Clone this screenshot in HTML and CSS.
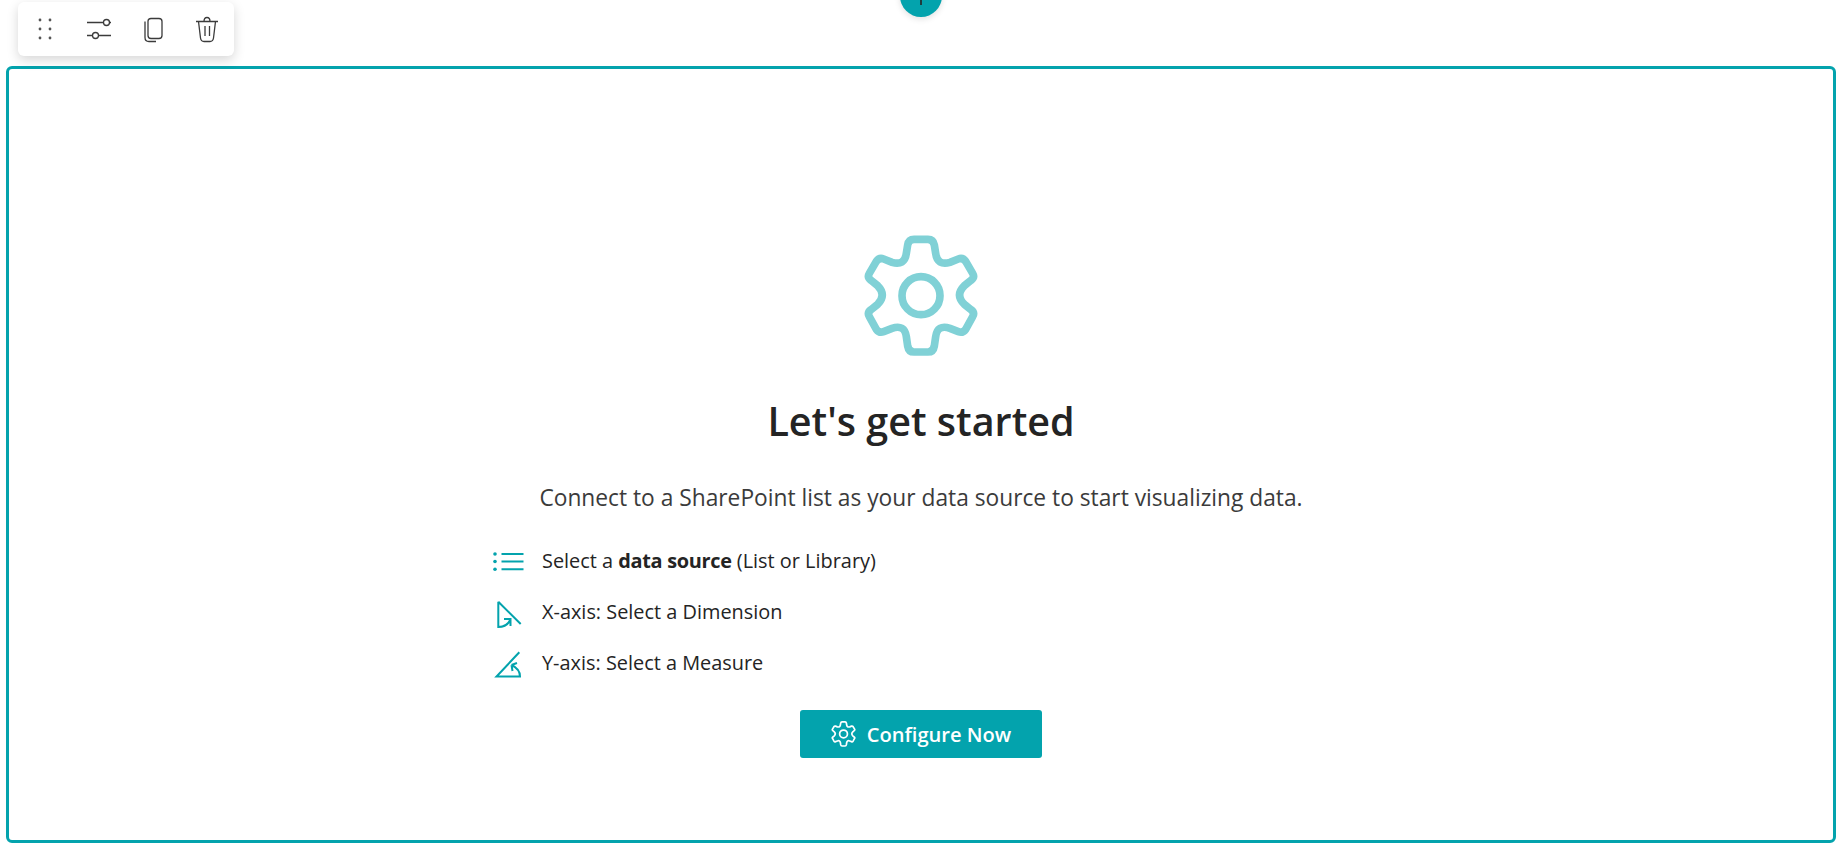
FILE: index.html
```html
<!DOCTYPE html>
<html lang="en">
<head>
    <meta charset="UTF-8">
    <meta name="viewport" content="width=device-width, initial-scale=1.0">
    <title>Let's get started</title>
    <link rel="stylesheet" href="styles.css">
</head>
<body>

    <!-- Add section button, cut off by the top of the page -->
    <div class="add-button"><span class="add-stem"></span></div>

    <!-- Web part toolbar -->
    <div class="part-toolbar">
        <svg class="tool-icon" viewBox="0 0 32 32">
            <g class="dots">
                <circle cx="11" cy="7" r="1.4"/><circle cx="21" cy="7" r="1.4"/>
                <circle cx="11" cy="16" r="1.4"/><circle cx="21" cy="16" r="1.4"/>
                <circle cx="11" cy="25" r="1.4"/><circle cx="21" cy="25" r="1.4"/>
            </g>
        </svg>
        <svg class="tool-icon" viewBox="0 0 32 32">
            <path d="M4 9.5H20.5M26.500 9.500H28M4 22.500H9.500M15.500 22.500H28"/>
            <circle cx="23.500" cy="9.500" r="3"/>
            <circle cx="12.500" cy="22.500" r="3"/>
        </svg>
        <svg class="tool-icon" viewBox="0 0 32 32">
            <rect x="11" y="5.500" width="14" height="20" rx="3"/>
            <path d="M8 8.500V24.500Q8 28.500 12 28.500H19"/>
        </svg>
        <svg class="tool-icon" viewBox="0 0 32 32">
            <path d="M5 8.500H27M13 8.500Q13 4.500 16 4.500Q19 4.500 19 8.500M7.500 8.500L9.500 25Q10 28.500 13 28.500H19Q22 28.500 22.500 25L24.500 8.500M14 13V23M18.500 13V23"/>
        </svg>
    </div>

    <div class="part-frame">
        <div class="start-panel">
            <svg class="big-gear" viewBox="0 0 480 450">
                <path d="M222 58H264Q280 58 283 75L287 100Q292 138 330 127L355 117Q368 112 377 124L398 160Q405 172 393 181L373 197Q345 225 373 253L393 269Q405 278 398 290L377 328Q368 340 355 335L330 325Q292 312 287 350L283 378Q280 396 264 396H222Q206 396 203 378L199 350Q194 312 156 325L131 335Q118 340 109 328L88 290Q81 278 93 269L113 253Q141 225 113 197L93 181Q81 172 88 160L109 124Q118 112 131 117L156 127Q194 138 199 100L203 75Q206 58 222 58Z"/>
                <circle cx="243" cy="227" r="57"/>
            </svg>

            <h1 class="start-title">Let's get started</h1>
            <p class="start-text">Connect to a SharePoint list as your data source to start visualizing data.</p>

            <ul class="step-list">
                <li class="step">
                    <svg class="step-icon" viewBox="0 0 34 34">
                        <circle class="fill" cx="4" cy="10" r="1.800"/>
                        <circle class="fill" cx="4" cy="17.500" r="1.800"/>
                        <circle class="fill" cx="4" cy="25.300" r="1.800"/>
                        <path d="M10.500 10H32.500M10.500 17.500H32.500M10.500 25.300H32.500"/>
                    </svg>
                    <span>Select a <b>data source</b> (List or Library)</span>
                </li>
                <li class="step">
                    <svg class="step-icon" viewBox="0 0 34 34">
                        <path d="M7.300 6.700L29.700 29M7.300 6.700V33M7.300 32Q16 32 19.500 24.500M13 24H19.500V31"/>
                    </svg>
                    <span>X-axis: Select a Dimension</span>
                </li>
                <li class="step">
                    <svg class="step-icon" viewBox="0 0 34 34">
                        <path d="M28.300 6.300L5.500 30.500H29Q29 23 20.500 19M20.500 19L26 17M20.500 19L21.500 25"/>
                    </svg>
                    <span>Y-axis: Select a Measure</span>
                </li>
            </ul>

            <button class="configure-button">
                <svg class="small-gear" viewBox="70 45 345 365">
                    <path d="M222 58H264Q280 58 283 75L287 100Q292 138 330 127L355 117Q368 112 377 124L398 160Q405 172 393 181L373 197Q345 225 373 253L393 269Q405 278 398 290L377 328Q368 340 355 335L330 325Q292 312 287 350L283 378Q280 396 264 396H222Q206 396 203 378L199 350Q194 312 156 325L131 335Q118 340 109 328L88 290Q81 278 93 269L113 253Q141 225 113 197L93 181Q81 172 88 160L109 124Q118 112 131 117L156 127Q194 138 199 100L203 75Q206 58 222 58Z"/>
                    <circle cx="243" cy="227" r="55"/>
                </svg>
                Configure Now
            </button>
        </div>
    </div>

</body>
</html>
```

FILE: styles.css
```css
* {
    box-sizing: border-box;
}

html,
body {
    height: 100%;
}

body {
    margin: 0;
    padding: 66px 4px 1px 6px;
    overflow: hidden;
    background-color: #FFFFFF;
    color: #242424;
    font-family: "Open Sans", "Noto Sans", sans-serif;
}

.add-button {
    position: absolute;
    left: 900px;
    top: -25px;
    width: 42px;
    height: 42px;
    border-radius: 50%;
    background-color: #03A3AD;
    box-shadow: 0 2px 6px rgba(0, 0, 0, 0.12);
}

.add-stem {
    position: absolute;
    left: 20px;
    top: 25px;
    width: 2px;
    height: 5px;
    background-color: #1F3B3D;
}

.part-toolbar {
    position: absolute;
    left: 18px;
    top: 2px;
    width: 216px;
    height: 54px;
    display: flex;
    align-items: center;
    justify-content: space-between;
    padding: 0 11px;
    border-radius: 6px;
    background-color: #FFFFFF;
    box-shadow: 0 4px 12px rgba(0, 0, 0, 0.16);
}

.tool-icon {
    width: 32px;
    height: 32px;
    fill: none;
    stroke: #3B3B3B;
    stroke-width: 1.300;
}

.dots {
    fill: #555555;
    stroke: none;
}

.part-frame {
    height: 100%;
    border: 3px solid #03A3AD;
    border-radius: 6px;
}

.start-panel {
    display: flex;
    flex-direction: column;
    align-items: center;
    padding-top: 151px;
}

.big-gear {
    width: 160px;
    height: 150px;
    margin-left: -2px;
    fill: none;
    stroke: #80D1D6;
    stroke-width: 23;
}

.start-title {
    margin: 23px 0 0 0;
    font-size: 39.500px;
    line-height: 56px;
    font-weight: 600;
}

.start-text {
    margin: 33px 0 0 0;
    font-size: 22.750px;
    line-height: 32px;
    color: #3B3B3B;
}

.step-list {
    width: 860px;
    margin: 21px 0 0 0;
    padding: 0;
    list-style: none;
}

.step {
    display: flex;
    align-items: center;
    gap: 17px;
    height: 51px;
    font-size: 19.900px;
}

.step b {
    font-weight: 700;
    letter-spacing: -0.300px;
}

.step-icon {
    width: 34px;
    height: 34px;
    fill: none;
    stroke: #03A3AD;
    stroke-width: 2;
}

.step-icon .fill {
    fill: #03A3AD;
    stroke: none;
}

.configure-button {
    display: flex;
    align-items: center;
    justify-content: center;
    gap: 11px;
    width: 242px;
    height: 48px;
    margin-top: 22px;
    border: none;
    border-radius: 3px;
    background-color: #03A3AD;
    color: #FFFFFF;
    font-family: inherit;
    font-size: 20.100px;
    font-weight: 600;
}

.small-gear {
    width: 25px;
    height: 26px;
    fill: none;
    stroke: #FFFFFF;
    stroke-width: 24;
}
```
